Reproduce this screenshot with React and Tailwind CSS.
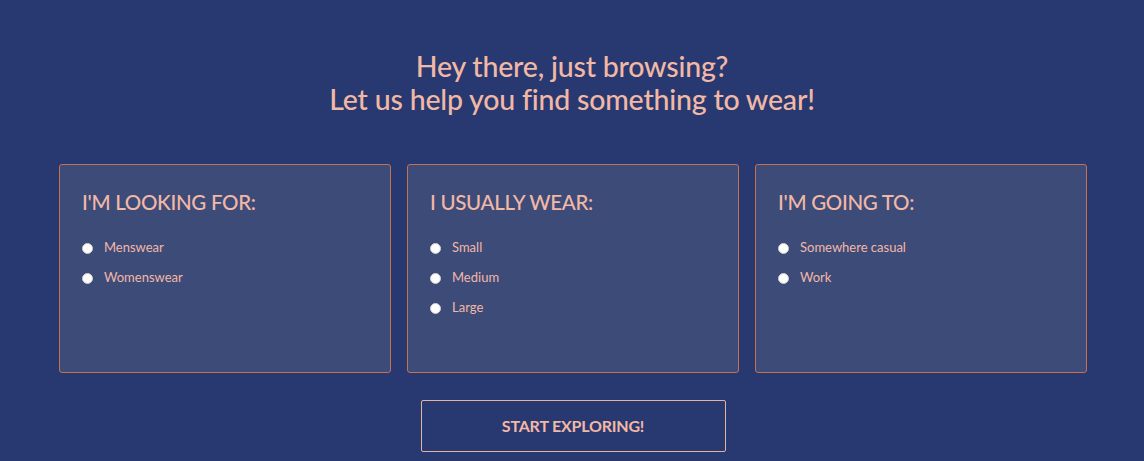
const groups = [
  { title: "I'M LOOKING FOR:", name: 'gender', options: ['Menswear', 'Womenswear'] },
  { title: 'I USUALLY WEAR:', name: 'size', options: ['Small', 'Medium', 'Large'] },
  { title: "I'M GOING TO:", name: 'occasion', options: ['Somewhere casual', 'Work'] },
]

function Card({ group }) {
  return (
    <div className="h-[209px] rounded-[3px] border border-[#c7714f] bg-[#3d4b79] px-[22px] pt-[24px]">
      <h2 className="text-[20.5px] font-medium leading-[26px] tracking-[-0.3px] text-[#f2b8a6]">{group.title}</h2>
      <div className="mt-[24px] flex flex-col gap-[12px]">
        {group.options.map((opt) => (
          <label key={opt} className="flex h-[18px] items-center gap-[11px] text-[13px] text-[#f2b8a6]">
            <input
              type="radio"
              name={group.name}
              className="h-[11px] w-[11px] appearance-none rounded-full border border-[#cfcfcf] bg-white"
            />
            <span>{opt}</span>
          </label>
        ))}
      </div>
    </div>
  )
}

export default function App() {
  return (
    <div
      className="min-h-[461px] bg-[#283870] pt-[50px]"
      style={{ fontFamily: 'Lato, "Noto Sans", sans-serif' }}
    >
      <h1 className="text-center text-[28.5px] font-medium leading-[33px] tracking-[-0.2px] text-[#f2b8a6]">
        Hey there, just browsing?
        <br />
        Let us help you find something to wear!
      </h1>

      <div className="ml-[59px] w-[1028px]">
        <div className="mt-[48px] grid grid-cols-3 gap-[16px]">
          {groups.map((g) => (
            <Card key={g.name} group={g} />
          ))}
        </div>

        <div className="mt-[27px] flex justify-center">
          <button className="h-[52px] w-[305px] rounded-[2px] border border-[#e3b2a2] text-[16px] font-bold tracking-[-0.2px] text-[#f2b8a6]">
            START EXPLORING!
          </button>
        </div>
      </div>
    </div>
  )
}
